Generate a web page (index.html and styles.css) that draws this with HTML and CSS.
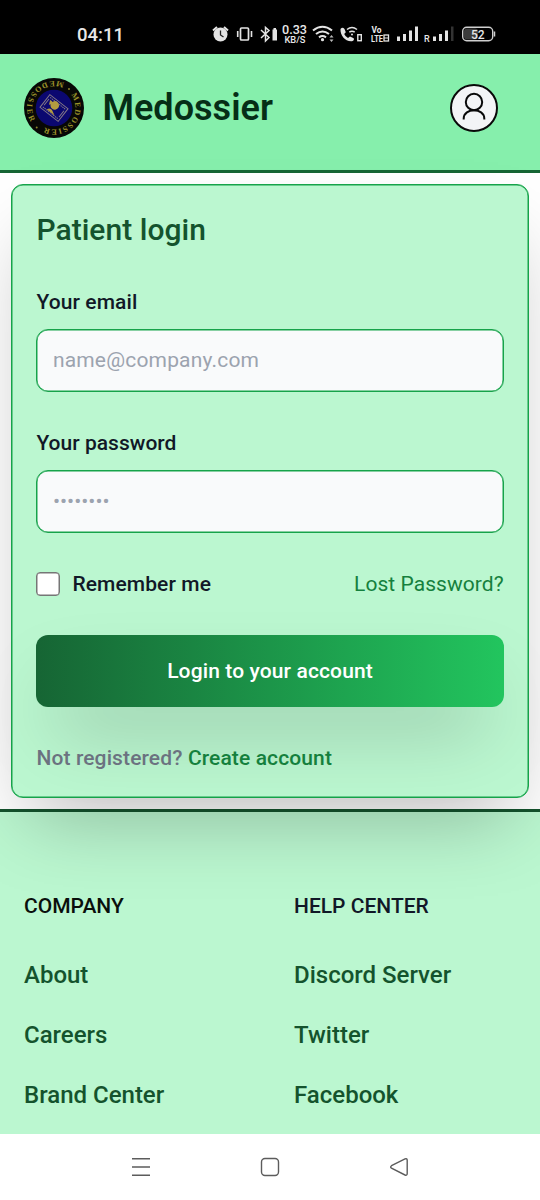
FILE: index.html
```html
<!DOCTYPE html>
<html lang="en">
<head>
<meta charset="utf-8">
<title>Medossier</title>
<link rel="stylesheet" href="styles.css">
</head>
<body>
<div class="screen">
  <div class="status">
    <svg width="540" height="54" viewBox="0 0 540 54" fill="none" stroke="#e4e4e4">
      <text class="st clock" x="77" y="41" textLength="47" lengthAdjust="spacingAndGlyphs">04:11</text>
      <!-- alarm -->
      <circle cx="220.500" cy="34.500" r="7" fill="#e4e4e4" stroke="none"/>
      <path d="M213 30.500l4-3.500M228 30.500l-4-3.500" stroke-width="2"/>
      <path d="M220.500 30.500v4.500l3 2" stroke="#222" stroke-width="1.300"/>
      <!-- vibrate -->
      <rect x="240.500" y="28" width="8" height="12" rx="1" stroke-width="1.700"/>
      <path d="M237.700 31v6M251.500 31v6" stroke-width="1.600"/>
      <!-- bluetooth and its battery -->
      <path d="M261 30l8 7.500-3.500 3.500V27.500l3.500 3-8 7.500" stroke-width="1.500"/>
      <path d="M272.500 29.500h1v-1.500h2.500v1.500h1V40.500h-4.500z" fill="#e4e4e4" stroke="none"/>
      <text class="st speed" x="282" y="34" textLength="25" lengthAdjust="spacingAndGlyphs">0.33</text>
      <text class="st unit" x="284.500" y="43" textLength="21" lengthAdjust="spacingAndGlyphs">KB/S</text>
      <!-- wifi -->
      <path d="M313 30.500q9.500-7.500 19 0M316 34q6.500-5 13 0M319 37.300q3.500-2.500 7 0" stroke-width="2.100"/>
      <circle cx="322.500" cy="39.700" r="1.600" fill="#e4e4e4" stroke="none"/>
      <path d="M329.500 37.500l2-2.500 2 2.500zM329.500 39.500l2 2.500 2-2.500z" fill="#bbb" stroke="none"/>
      <!-- wifi calling -->
      <path d="M340.500 29q2-2.300 4 0l1.300 3.200-1.600 1.800q1 2.500 3.800 4l2-1.500 3.700 1.800q1 2-1.700 3c-6.500.7-12-6-11.500-12.300z" fill="#e4e4e4" stroke="none"/>
      <path d="M347 29.500q5-4 10 0M349.300 32.200q2.700-2 5.400 0" stroke-width="1.500"/>
      <circle cx="352" cy="34.500" r="1" fill="#e4e4e4" stroke="none"/>
      <rect x="357.800" y="34.700" width="3.500" height="6" stroke-width="1.400"/>
      <text class="st volte" x="371.500" y="33" textLength="10" lengthAdjust="spacingAndGlyphs">Vo</text>
      <text class="st volte" x="371" y="41.500" textLength="12" lengthAdjust="spacingAndGlyphs">LTE</text>
      <rect x="384" y="35" width="4.500" height="6" stroke-width="1.300"/>
      <path d="M384 38h4" />
      <!-- signal -->
      <g fill="#e4e4e4" stroke="none">
        <rect x="397" y="36.500" width="3" height="4.500"/><rect x="403" y="34" width="3" height="7"/><rect x="409" y="30.500" width="3" height="10.500"/><rect x="415" y="26.500" width="3" height="14.500"/>
        <rect x="433" y="36.500" width="3" height="4.500"/><rect x="439" y="34" width="3" height="7"/><rect x="445" y="30.500" width="3" height="10.500"/><rect x="451" y="26.500" width="2.500" height="14.500" fill="#333"/>
      </g>
      <text class="st roam" x="424" y="41.500">R</text>
      <!-- battery -->
      <rect x="464" y="28.500" width="14" height="11" rx="3" fill="#3c3c3c" stroke="none"/>
      <rect x="462.700" y="27.200" width="30" height="13.600" rx="4" stroke="#cfcfcf" stroke-width="1.400"/>
      <path d="M494.500 31.500v5" stroke="#cfcfcf" stroke-width="1.500"/>
      <text class="st level" x="471" y="38.500">52</text>
    </svg>
  </div>

  <header class="header">
    <a class="brand">
      <svg width="60" height="60" viewBox="-30 -30 60 60">
        <defs>
          <path id="ring-cw" d="M16.900-13.200A21.500 21.500 0 0 1-10.100 19"/>
          <path id="ring-ccw" d="M10.100-25A27 27 0 0 0-22.100 15.500"/>
        </defs>
        <circle r="30" fill="#080806"/>
        <circle r="18.300" fill="#0b0870"/>
        <text class="ring"><textPath href="#ring-cw" textLength="57">MEDOSSIER</textPath></text>
        <text class="ring"><textPath href="#ring-ccw" textLength="67">MEDOSSIER</textPath></text>
        <circle cx="15" cy="-19" r="1" fill="#8b832a"/>
        <circle cx="-17.300" cy="19.500" r="1" fill="#8b832a"/>
        <g transform="rotate(38)" fill="none" stroke="#857a86">
          <rect x="-11.500" y="-8" width="23" height="16" stroke-width="1"/>
          <path d="M-9.500-6h19M-9.500 6h19" stroke-width="1" stroke-dasharray="1.500 .7"/>
          <path d="M-9.500-4v8M9.500-4v8" stroke-width="1"/>
          <circle cx="-1" cy="-2.500" r="4.300" fill="#b39b40" stroke="none"/>
          <path d="M-5 5.500q2-4 5-2.500l5 2.500zM-8-4q3-1 4 2l-2 2.500z" fill="#b39b40" stroke="none"/>
        </g>
      </svg>
      <span class="brand-name">Medossier</span>
    </a>
    <button class="avatar" aria-label="Account">
      <svg width="48" height="48" viewBox="0 0 48 48" fill="none" stroke="#090909" stroke-width="2">
        <circle cx="24" cy="24" r="23" fill="#f3f4f6"/>
        <circle cx="24" cy="18" r="8.200"/>
        <path d="M13.700 35.500V34.500c0-11 20.600-11 20.600 0V35.500"/>
      </svg>
    </button>
  </header>

  <main class="main">
    <form class="card">
      <h1 class="title">Patient login</h1>
      <div class="field">
        <label class="label" for="email">Your email</label>
        <input class="input" id="email" type="email" placeholder="name@company.com">
      </div>
      <div class="field">
        <label class="label tight" for="password">Your password</label>
        <input class="input secret" id="password" type="password" placeholder="••••••••">
      </div>
      <div class="options">
        <label class="remember"><input class="check" type="checkbox">Remember me</label>
        <a class="lost">Lost Password?</a>
      </div>
      <button class="submit" type="button">Login to your account</button>
      <p class="register">Not registered? <a class="create">Create account</a></p>
    </form>
  </main>

  <footer class="footer">
    <section class="column">
      <h2 class="heading dark">COMPANY</h2>
      <ul class="links"><li>About</li><li>Careers</li><li>Brand Center</li></ul>
    </section>
    <section class="column">
      <h2 class="heading">HELP CENTER</h2>
      <ul class="links"><li>Discord Server</li><li>Twitter</li><li>Facebook</li></ul>
    </section>
  </footer>

  <nav class="navbar">
    <svg width="20" height="20" viewBox="0 0 20 20" fill="none" stroke="#5c5c5c" stroke-width="1.500"><path d="M1 1.700h18M1 10h18M1 18.200h18"/></svg>
    <svg width="20" height="20" viewBox="0 0 20 20" fill="none" stroke="#5c5c5c" stroke-width="1.400"><rect x="1.500" y="1.500" width="17" height="17" rx="3.500"/></svg>
    <svg width="20" height="20" viewBox="0 0 20 20" fill="none" stroke="#5c5c5c" stroke-width="1.400"><path d="M2.500 8.700L16 1.900q2.200-.8 2.200 1.500V16.500q0 2.300-2.200 1.500L2.500 11.200q-1.700-1.200 0-2.500z"/></svg>
  </nav>
</div>
</body>
</html>
```
FILE: styles.css
```css
* { box-sizing: border-box; margin: 0; padding: 0; }
body { background: #fff; font-family: Roboto, "Liberation Sans", sans-serif; }
.screen { width: 540px; height: 1200px; overflow: hidden; display: flex; flex-direction: column; background: #fff; }
svg { display: block; }

.status { height: 54px; background: #000; flex: none; }
.st { fill: #e8e8e8; stroke: none; font-weight: 500; }
.clock { font-size: 19px; }
.speed { font-size: 12.5px; }
.unit { font-size: 9.500px; }
.volte { font-size: 9px; font-weight: 700; }
.roam { font-size: 9px; }
.level { font-size: 12px; }

.header {
  flex: none; height: 118.500px; padding: 0 42px 8px 24px;
  display: flex; align-items: center; justify-content: space-between;
  background: #86efac; border-bottom: 3px solid #166534;
}
.brand { display: flex; align-items: center; gap: 18.400px; }
.brand-name { font-size: 36px; line-height: 48px; font-weight: 600; letter-spacing: .04px; color: #052e16; }
.ring { font-family: "Liberation Serif", serif; font-size: 8px; font-weight: 700; fill: #9c932a; }
.avatar { border: 0; background: none; }

.main { flex: none; padding: 11px; }
.card {
  position: relative; z-index: 1;
  display: flex; flex-direction: column; gap: 36px;
  padding: 24px 24.400px; border: 1px solid #16a34a; border-radius: 12px;
  background: #bbf7d0;
  box-shadow: inset 0 0 0 .5px #16a34a, 0 37.500px 75px -18px rgba(0, 0, 0, .25);
}
.title { font-size: 30px; line-height: 42px; font-weight: 500; letter-spacing: .04px; color: #14532d; }
.field { display: flex; flex-direction: column; gap: 12px; }
.label, .remember { font-size: 21px; line-height: 30px; font-weight: 500; letter-spacing: .1px; color: #111827; }
.tight { letter-spacing: .03px; }
.input {
  width: 100%; height: 63px; padding: 15px 15.500px;
  border: 1px solid #16a34a; border-radius: 12px; box-shadow: inset 0 0 0 .5px #16a34a;
  background: #f9fafb; font: 400 21px/30px Roboto, sans-serif; letter-spacing: .18px;
}
.secret { letter-spacing: 0; }
.input::placeholder { color: #9ca3af; opacity: 1; }
.options { display: flex; justify-content: space-between; align-items: center; height: 30px; }
.remember { display: flex; align-items: center; gap: 12px; }
.check { appearance: none; width: 24px; height: 24px; border: 1px solid #767676; border-radius: 4px; background: #fff; box-shadow: inset 0 0 0 .5px #767676; }
.lost { font-size: 21px; line-height: 30px; letter-spacing: .05px; color: #15803d; }
.submit {
  height: 72px; border: 0; border-radius: 12px; color: #fff;
  font: 500 21px/30px Roboto, sans-serif; letter-spacing: .12px;
  background: linear-gradient(to right, #166534, #22c55e);
  box-shadow: 0 37.500px 75px -18px rgba(0, 0, 0, .25);
}
.register { position: relative; font-size: 21px; line-height: 30px; font-weight: 500; letter-spacing: .12px; color: #6b7280; }
.create { color: #15803d; }

.footer {
  flex: 1; display: grid; grid-template-columns: 246px 1fr; column-gap: 24px;
  padding: 79.500px 24px 0; background: #bbf7d0; border-top: 3px solid #14532d;
}
.heading { font-size: 21px; line-height: 30px; font-weight: 500; color: #111827; margin-bottom: 36px; }
.dark { color: #0a0f0c; }
.links { list-style: none; display: flex; flex-direction: column; gap: 24px; font-size: 24px; line-height: 36px; font-weight: 500; color: #14532d; }

.navbar { flex: none; height: 66px; padding: 0 131px; display: flex; align-items: center; justify-content: space-between; background: #fff; position: relative; z-index: 2; }
```
